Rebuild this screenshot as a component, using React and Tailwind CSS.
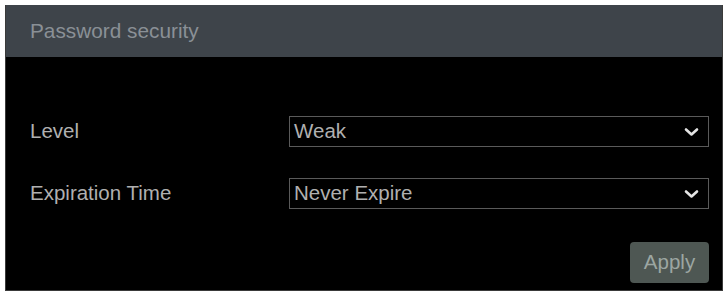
import React from "react";

function Chevron() {
  return (
    <svg width="15" height="10" viewBox="0 0 15 10" fill="none">
      <path d="M2 2.5 L7.5 7.5 L13 2.5" stroke="#e4e4e4" strokeWidth="2.6" strokeLinecap="round" strokeLinejoin="round" />
    </svg>
  );
}

function Select({ value }) {
  return (
    <div className="flex h-[31px] w-[420px] items-center justify-between border border-[#5a5a5a] pl-[4px] pr-[9px]">
      <span className="text-[20.5px] leading-none text-[#b0b0b0]">{value}</span>
      <Chevron />
    </div>
  );
}

export default function App() {
  return (
    <div
      className="h-[292px] w-[728px] bg-white pl-[5px] pr-[5px] pt-[5px]"
      style={{ fontFamily: '"Liberation Sans", Arial, sans-serif' }}
    >
      <div className="flex h-[286px] flex-col border-x border-b border-[#3a3a3a] bg-black">
        <div className="flex h-[52px] items-center bg-[#3e444a] pl-[24px]">
          <span className="text-[20.8px] leading-none text-[#8a9096]">Password security</span>
        </div>
        <div className="flex flex-1 flex-col pl-[24px] pr-[13px] pt-[59px]">
          <div className="flex items-center">
            <span className="w-[259px] text-[20.5px] leading-none text-[#b0b0b0]">Level</span>
            <Select value="Weak" />
          </div>
          <div className="mt-[31px] flex items-center">
            <span className="w-[259px] text-[20.5px] leading-none text-[#b0b0b0]">Expiration Time</span>
            <Select value="Never Expire" />
          </div>
          <div className="mt-[33px] flex justify-end">
            <button className="flex h-[41px] w-[79px] items-center justify-center rounded-[4px] bg-[#4e5753] text-[20.5px] leading-none text-[#9ca6a2]">
              Apply
            </button>
          </div>
        </div>
      </div>
    </div>
  );
}
